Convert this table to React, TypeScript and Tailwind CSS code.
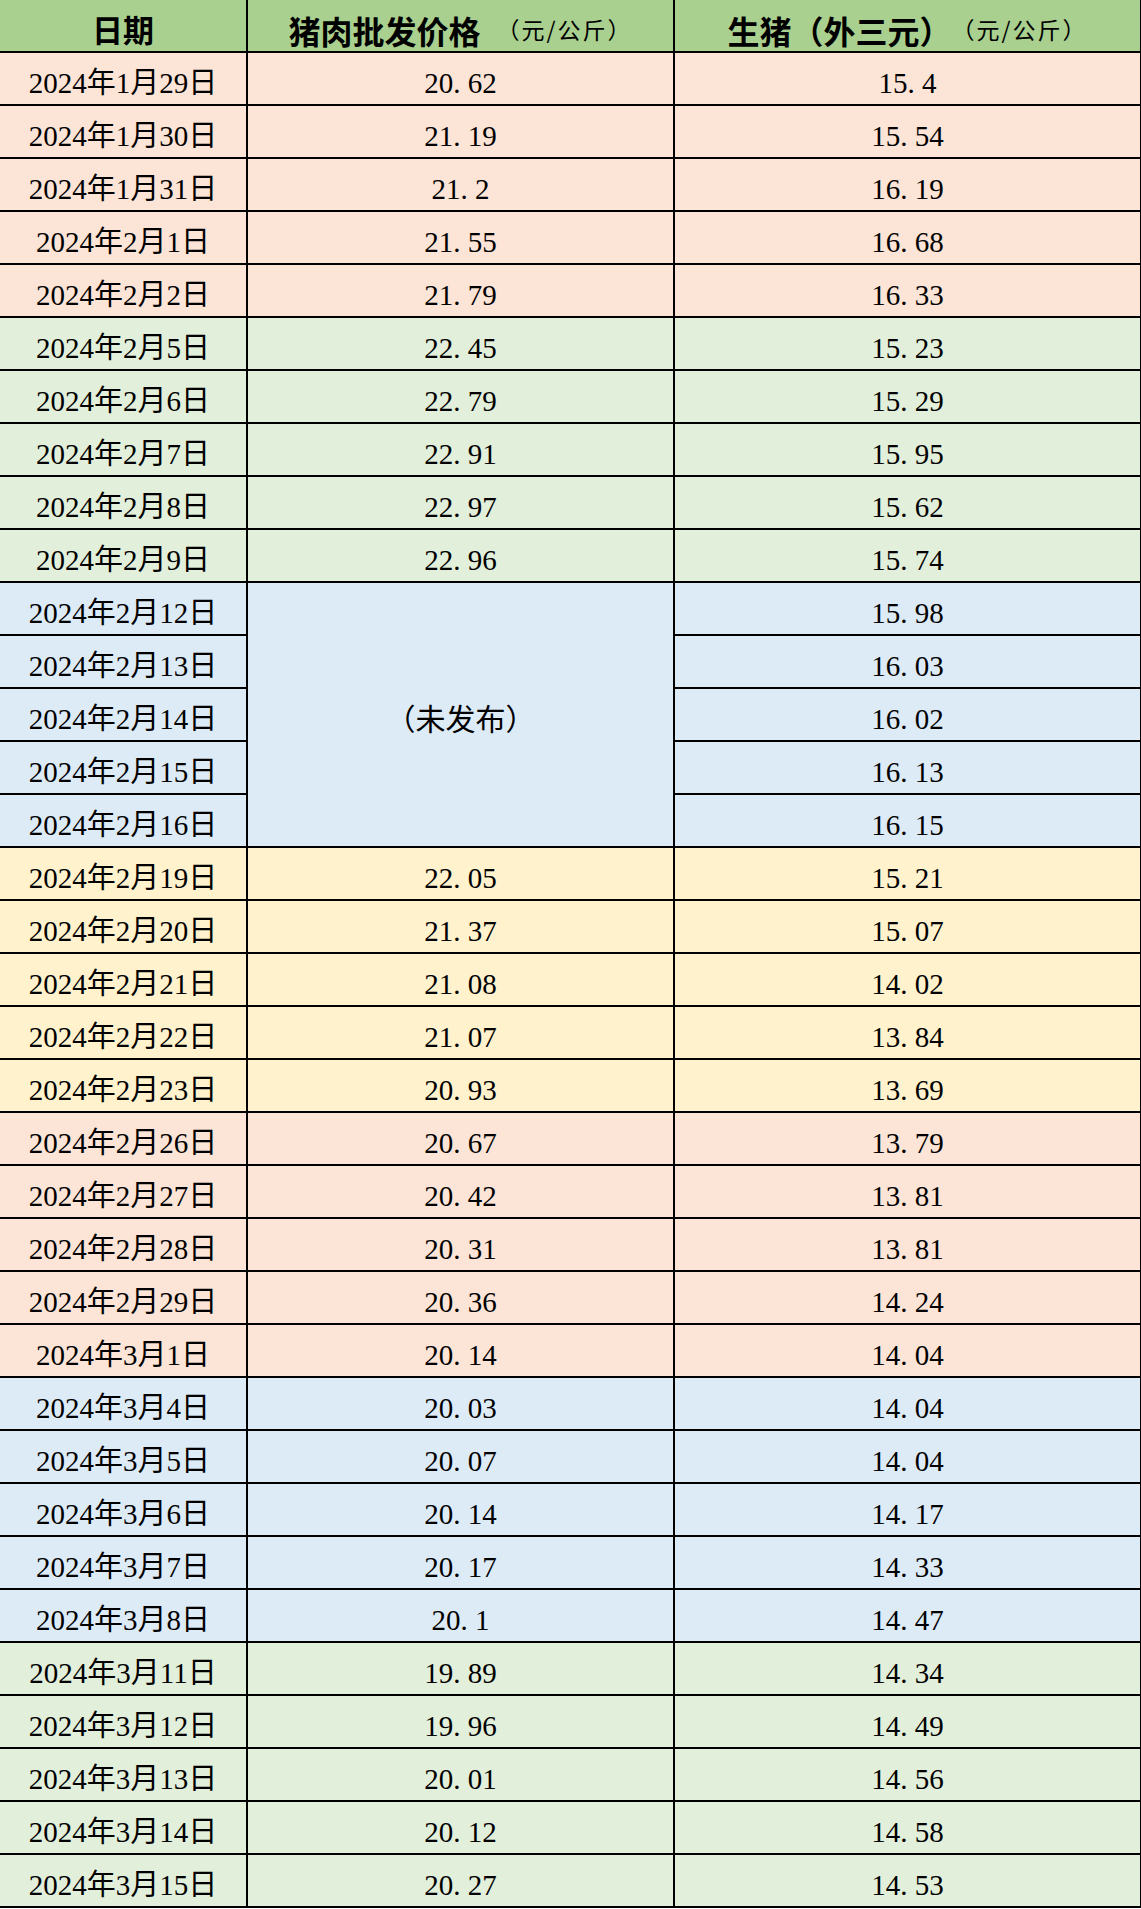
import React from "react";

type Row = { date: string; pork: string | null; hog: string };
type Group = { bg: string; rows: Row[] };

const groups: Group[] = [
  {
    bg: "bg-[#fce4d6]",
    rows: [
      { date: "2024年1月29日", pork: "20.62", hog: "15.4" },
      { date: "2024年1月30日", pork: "21.19", hog: "15.54" },
      { date: "2024年1月31日", pork: "21.2", hog: "16.19" },
      { date: "2024年2月1日", pork: "21.55", hog: "16.68" },
      { date: "2024年2月2日", pork: "21.79", hog: "16.33" },
    ],
  },
  {
    bg: "bg-[#e2efda]",
    rows: [
      { date: "2024年2月5日", pork: "22.45", hog: "15.23" },
      { date: "2024年2月6日", pork: "22.79", hog: "15.29" },
      { date: "2024年2月7日", pork: "22.91", hog: "15.95" },
      { date: "2024年2月8日", pork: "22.97", hog: "15.62" },
      { date: "2024年2月9日", pork: "22.96", hog: "15.74" },
    ],
  },
  {
    bg: "bg-[#ddebf7]",
    rows: [
      { date: "2024年2月12日", pork: null, hog: "15.98" },
      { date: "2024年2月13日", pork: null, hog: "16.03" },
      { date: "2024年2月14日", pork: null, hog: "16.02" },
      { date: "2024年2月15日", pork: null, hog: "16.13" },
      { date: "2024年2月16日", pork: null, hog: "16.15" },
    ],
  },
  {
    bg: "bg-[#fff2cc]",
    rows: [
      { date: "2024年2月19日", pork: "22.05", hog: "15.21" },
      { date: "2024年2月20日", pork: "21.37", hog: "15.07" },
      { date: "2024年2月21日", pork: "21.08", hog: "14.02" },
      { date: "2024年2月22日", pork: "21.07", hog: "13.84" },
      { date: "2024年2月23日", pork: "20.93", hog: "13.69" },
    ],
  },
  {
    bg: "bg-[#fce4d6]",
    rows: [
      { date: "2024年2月26日", pork: "20.67", hog: "13.79" },
      { date: "2024年2月27日", pork: "20.42", hog: "13.81" },
      { date: "2024年2月28日", pork: "20.31", hog: "13.81" },
      { date: "2024年2月29日", pork: "20.36", hog: "14.24" },
      { date: "2024年3月1日", pork: "20.14", hog: "14.04" },
    ],
  },
  {
    bg: "bg-[#ddebf7]",
    rows: [
      { date: "2024年3月4日", pork: "20.03", hog: "14.04" },
      { date: "2024年3月5日", pork: "20.07", hog: "14.04" },
      { date: "2024年3月6日", pork: "20.14", hog: "14.17" },
      { date: "2024年3月7日", pork: "20.17", hog: "14.33" },
      { date: "2024年3月8日", pork: "20.1", hog: "14.47" },
    ],
  },
  {
    bg: "bg-[#e2efda]",
    rows: [
      { date: "2024年3月11日", pork: "19.89", hog: "14.34" },
      { date: "2024年3月12日", pork: "19.96", hog: "14.49" },
      { date: "2024年3月13日", pork: "20.01", hog: "14.56" },
      { date: "2024年3月14日", pork: "20.12", hog: "14.58" },
      { date: "2024年3月15日", pork: "20.27", hog: "14.53" },
    ],
  },
];

// SimSun-style half-width period: dot sits left in a half-em box
function Num({ value }: { value: string }) {
  const [a, b] = value.split(".");
  return (
    <span>
      {a}
      {b !== undefined && (
        <>
          <span className="inline-block w-[0.5em] text-left">.</span>
          {b}
        </>
      )}
    </span>
  );
}

const cell =
  "flex items-center justify-center border-b-2 border-black pt-[10px] text-[29px] text-black";

const head =
  "flex items-center justify-center border-b-2 border-black bg-[#a9d08e] pt-[8px] font-['Noto_Sans_CJK_SC',sans-serif] text-black";

export default function App() {
  return (
    <div
      className="w-[1141px] bg-white"
      style={{ fontFamily: '"Liberation Serif", "Noto Sans CJK SC", serif' }}
    >
      <div className="grid grid-cols-[248px_427px_466px] auto-rows-[53px]">
        {/* header */}
        <div className={`${head} border-r-2 text-[31px] font-bold`}>日期</div>
        <div className={`${head} border-r-2`}>
          <span className="text-[32px] font-bold">猪肉批发价格</span>
          <span className="ml-4 text-[23px] tracking-[2px]">（元/公斤）</span>
        </div>
        <div className={`${head} border-r`}>
          <span className="text-[32px] font-bold">生猪（外三元）</span>
          <span className="text-[23px] tracking-[2px]">（元/公斤）</span>
        </div>

        {groups.map((g, gi) =>
          g.rows.map((r, ri) => (
            <React.Fragment key={r.date}>
              <div className={`${cell} border-r-2 ${g.bg}`}>{r.date}</div>
              {r.pork !== null ? (
                <div className={`${cell} border-r-2 ${g.bg}`}>
                  <Num value={r.pork} />
                </div>
              ) : (
                ri === 0 && (
                  <div
                    key={"merged-" + gi}
                    className={`${cell} row-span-5 border-r-2 text-[30px] ${g.bg}`}
                  >
                    （未发布）
                  </div>
                )
              )}
              <div className={`${cell} border-r ${g.bg}`}>
                <Num value={r.hog} />
              </div>
            </React.Fragment>
          ))
        )}
      </div>
    </div>
  );
}
